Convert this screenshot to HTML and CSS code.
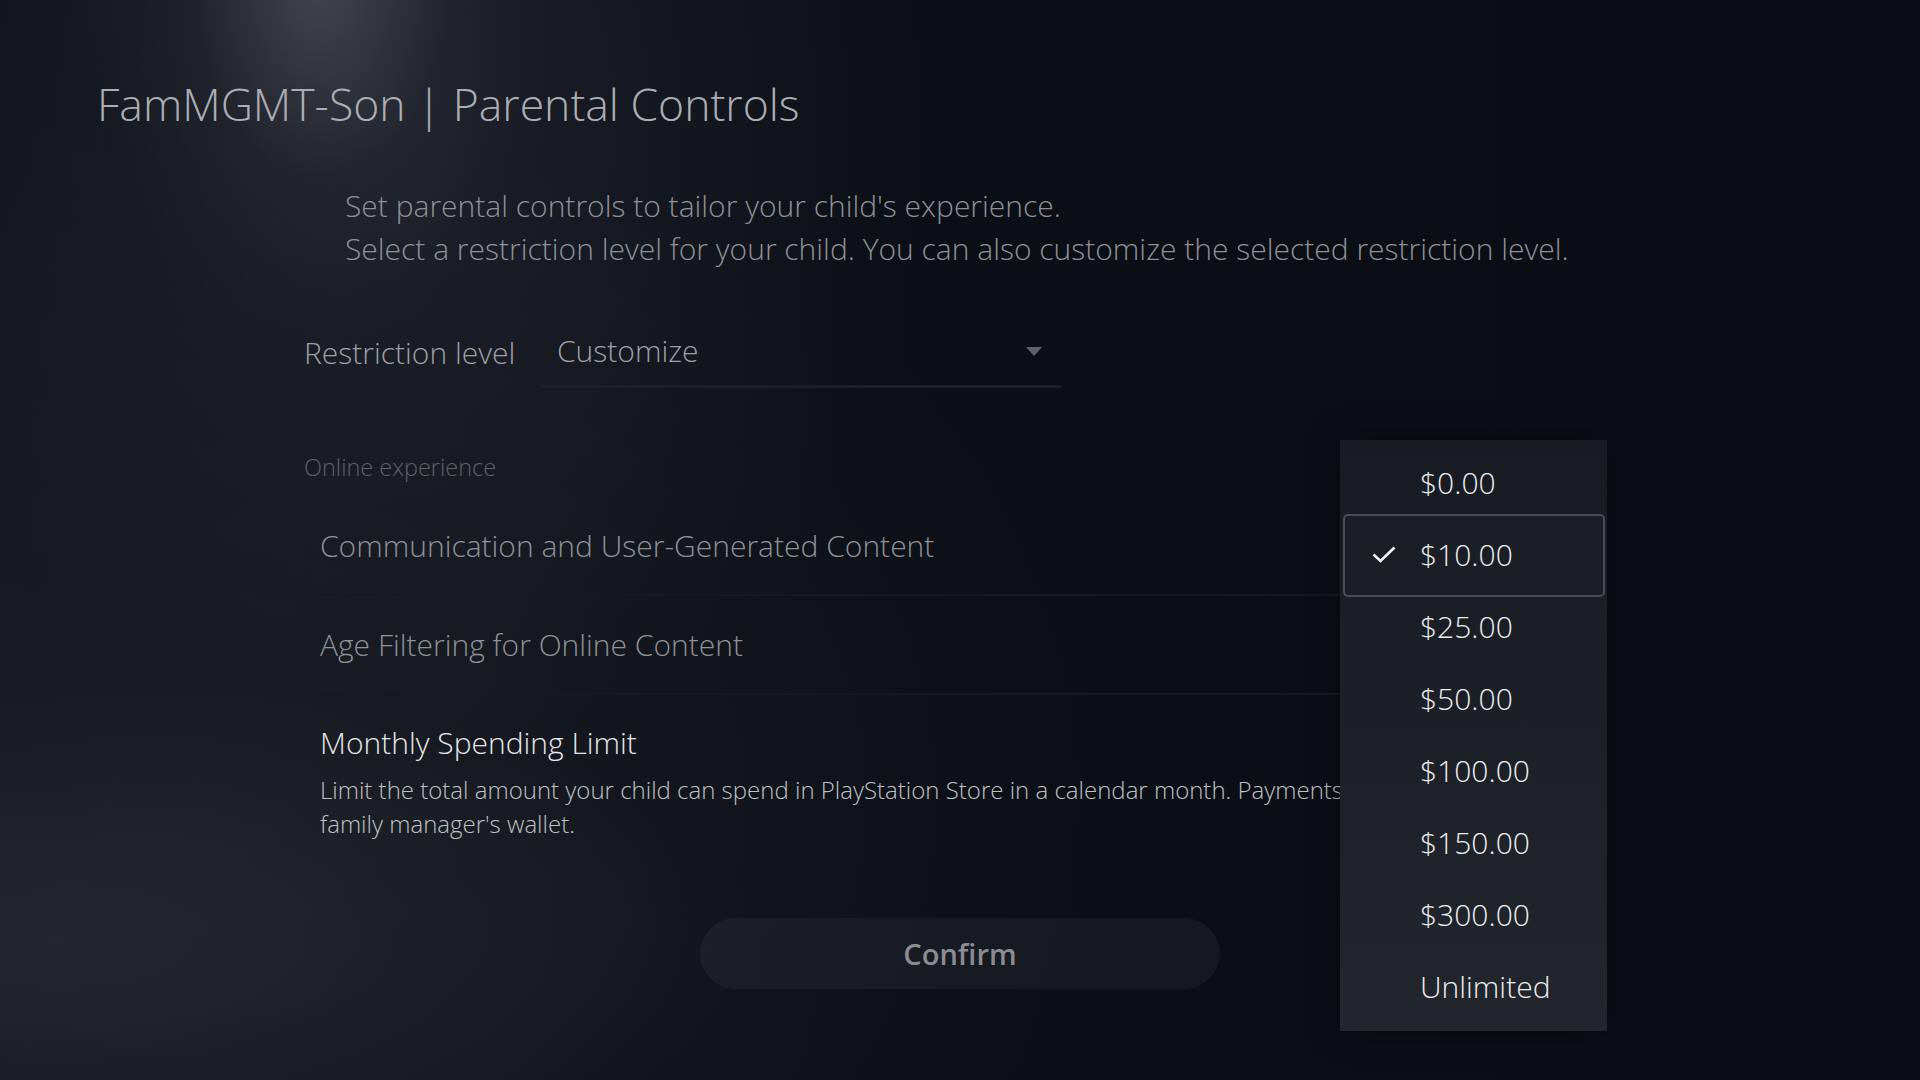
FILE: index.html
```html
<!DOCTYPE html>
<html lang="en">
<head>
<meta charset="utf-8">
<title>FamMGMT-Son | Parental Controls</title>
<link rel="stylesheet" href="styles.css">
</head>
<body>
<div class="screen">
  <h1 class="title">FamMGMT-Son | Parental Controls</h1>

  <div class="intro">
    <p>Set parental controls to tailor your child's experience.</p>
    <p>Select a restriction level for your child. You can also customize the selected restriction level.</p>
  </div>

  <div class="restriction">
    <span class="restriction-label">Restriction level</span>
    <div class="select">
      <span class="select-value">Customize</span>
      <svg class="select-arrow" width="16" height="9" viewBox="0 0 16 9"><path d="M0 0 H16 L8 9 Z" fill="#5f626a"/></svg>
    </div>
  </div>

  <div class="section-label">Online experience</div>

  <ul class="settings">
    <li class="setting">Communication and User-Generated Content</li>
    <li class="setting">Age Filtering for Online Content</li>
    <li class="setting setting-focus">
      <div class="setting-title">Monthly Spending Limit</div>
      <div class="setting-desc">Limit the total amount your child can spend in PlayStation Store in a calendar month. Payments will be made from the<br>family manager's wallet.</div>
    </li>
  </ul>

  <div class="actions">
    <button class="confirm">Confirm</button>
  </div>

  <ul class="menu">
    <li class="menu-item"><span class="menu-check"></span>$0.00</li>
    <li class="menu-item selected"><span class="menu-check"><svg width="24" height="17" viewBox="0 0 24 17"><path d="M1.5 8.5 L8.5 15 L22.5 1.5" fill="none" stroke="#f2f2f4" stroke-width="2.6" stroke-linejoin="miter"/></svg></span>$10.00</li>
    <li class="menu-item"><span class="menu-check"></span>$25.00</li>
    <li class="menu-item"><span class="menu-check"></span>$50.00</li>
    <li class="menu-item"><span class="menu-check"></span>$100.00</li>
    <li class="menu-item"><span class="menu-check"></span>$150.00</li>
    <li class="menu-item"><span class="menu-check"></span>$300.00</li>
    <li class="menu-item"><span class="menu-check"></span>Unlimited</li>
  </ul>
</div>
</body>
</html>
```

FILE: styles.css
```css
* { box-sizing: border-box; }

html, body {
  margin: 0;
  padding: 0;
  width: 1920px;
  height: 1080px;
  overflow: hidden;
}

body {
  font-family: "Open Sans", "Noto Sans", "DejaVu Sans", sans-serif;
  font-weight: 300;
  background-color: #0a0d14;
  background-image:
    radial-gradient(ellipse 240px 400px at 320px -40px, rgba(98, 101, 110, 0.6), rgba(60, 63, 72, 0.2) 55%, rgba(0,0,0,0) 100%),
    radial-gradient(ellipse 520px 640px at 400px 120px, rgba(40, 43, 52, 0.55), rgba(0,0,0,0) 100%),
    radial-gradient(ellipse 700px 260px at 60px 940px, rgba(40, 43, 50, 0.75), rgba(0,0,0,0) 100%),
    radial-gradient(ellipse 900px 700px at 200px 800px, rgba(26, 29, 36, 0.9), rgba(0,0,0,0) 100%),
    linear-gradient(90deg, #11141b 0%, #0c0f16 45%, #0a0d14 100%);
}

.screen {
  position: relative;
  width: 1920px;
  height: 1080px;
  padding-top: 77px;
}

.title {
  margin: 0;
  padding-left: 97px;
  font-size: 44.5px;
  line-height: 54px;
  font-weight: 300;
  color: #acaeb4;
}

.intro {
  margin-top: 53px;
  padding-left: 345px;
  color: #8f9197;
  font-size: 30px;
  line-height: 43px;
}

.intro p { margin: 0; }

.restriction {
  margin-top: 46px;
  padding-left: 304px;
  display: flex;
  align-items: stretch;
  height: 72px;
}

.restriction-label {
  display: flex;
  align-items: center;
  width: 237px;
  font-size: 30px;
  color: #9ea0a6;
}

.select {
  width: 521px;
  display: flex;
  align-items: center;
  justify-content: space-between;
  padding: 0 20px 0 16px;
  border-bottom: 3px solid #1c1f26;
  border-radius: 0 0 2px 2px;
}

.select-value {
  font-size: 30px;
  color: #9ea0a6;
}

.select-arrow { margin-top: 2px; }

.section-label {
  margin-top: 64px;
  padding-left: 304px;
  font-size: 23.5px;
  line-height: 30px;
  color: #5f6268;
}

.settings {
  list-style: none;
  margin: 15px 0 0 320px;
  padding: 0;
  width: 1260px;
}

.setting {
  height: 99px;
  display: flex;
  align-items: center;
  font-size: 30px;
  color: #8e9197;
  border-bottom: 2px solid #161920;
}

.setting-focus {
  display: block;
  height: auto;
  border-bottom: none;
  padding-top: 28px;
}

.setting-title {
  font-size: 30px;
  line-height: 40px;
  color: #e6e7ea;
  font-weight: 350;
}

.setting-desc {
  margin-top: 10px;
  width: 1020px;
  overflow: hidden;
  font-size: 24px;
  line-height: 34px;
  color: #bfc1c5;
  white-space: nowrap;
}

.actions {
  margin-top: 77px;
  display: flex;
  justify-content: center;
}

.confirm {
  width: 520px;
  height: 71px;
  border: none;
  border-radius: 36px;
  background: rgba(255, 255, 255, 0.045);
  color: #8a8c92;
  font-family: "Open Sans", "Noto Sans", sans-serif;
  font-size: 29px;
  font-weight: 600;
  padding: 0;
}

.menu {
  position: absolute;
  left: 1340px;
  top: 440px;
  width: 267px;
  margin: 0;
  padding: 6px 0 9px;
  list-style: none;
  background: linear-gradient(180deg, #181b22 0%, #1d2027 50%, #23262d 100%);
  box-shadow: 0 0 30px rgba(0,0,0,0.35);
}

.menu-item {
  position: relative;
  height: 72px;
  display: flex;
  align-items: center;
  padding-left: 32px;
  font-size: 30px;
  color: #ecedef;
  z-index: 0;
}

.menu-check {
  width: 48px;
  display: flex;
  align-items: center;
}

.menu-item.selected::before {
  content: "";
  position: absolute;
  left: 3px;
  right: 2px;
  top: -4px;
  bottom: -7px;
  border: 2px solid #4b4e56;
  border-radius: 5px;
  background: #1b1e25;
  z-index: -1;
}
```
